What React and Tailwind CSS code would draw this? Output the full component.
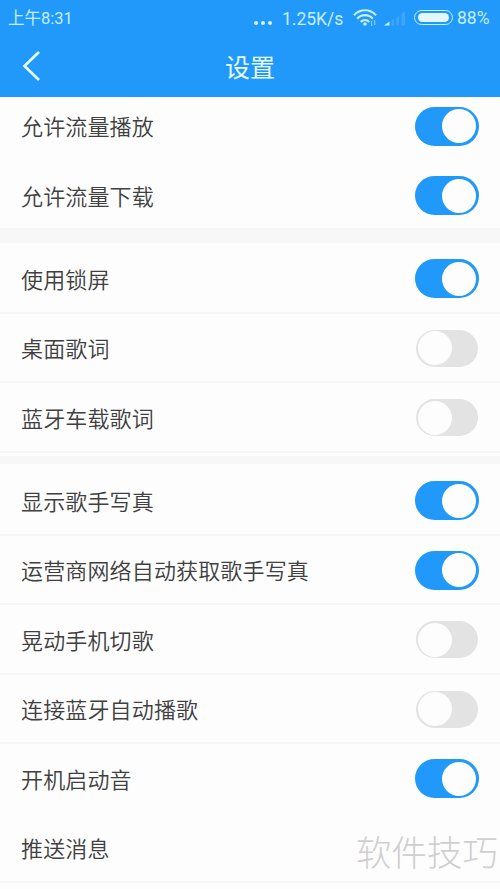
import React, { useState } from "react";

const GROUPS = [
  [
    { label: "允许流量播放", on: true },
    { label: "允许流量下载", on: true },
  ],
  [
    { label: "使用锁屏", on: true, line: true },
    { label: "桌面歌词", on: false, line: true },
    { label: "蓝牙车载歌词", on: false, line: true },
  ],
  [
    { label: "显示歌手写真", on: true, line: true },
    { label: "运营商网络自动获取歌手写真", on: true, line: true },
    { label: "晃动手机切歌", on: false, line: true },
    { label: "连接蓝牙自动播歌", on: false, line: true },
    { label: "开机启动音", on: true },
    { label: "推送消息", line: true },
  ],
];

function Toggle({ defaultOn }) {
  const [on, setOn] = useState(defaultOn);

  return (
    <button
      type="button"
      role="switch"
      aria-checked={on}
      onClick={() => setOn(!on)}
      className={`mt-[2px] flex h-[39px] w-16 shrink-0 items-center rounded-full ${
        on ? "justify-end bg-[#2199fb] px-[3px]" : "justify-start px-px"
      }`}
    >
      {on ? (
        <span className="h-[34px] w-[34px] rounded-full bg-[#fdfdfd]" />
      ) : (
        <span className="flex h-[37px] w-[62px] items-center rounded-full bg-[#e3e3e3] pl-0.5">
          <span className="h-[34px] w-[34px] rounded-full bg-[#fdfdfd]" />
        </span>
      )}
    </button>
  );
}

function Row({ label, on, line }) {
  return (
    <div
      className={`flex h-[69.5px] items-center justify-between border-b-2 pr-[21px] pl-[21px] ${
        line ? "border-[#f6f6f6]" : "border-transparent"
      }`}
    >
      <span className="text-[22px] leading-8 font-[350] tracking-[0.15px] whitespace-nowrap text-[#404040]">
        {label}
      </span>
      {on !== undefined && <Toggle defaultOn={on} />}
    </div>
  );
}

function StatusBar() {
  return (
    <div className="flex h-9 items-center pr-2 pl-2 text-[#c5efff]">
      <span className="mt-px font-['Roboto','Noto_Sans_CJK_SC',sans-serif] text-[16.5px] leading-9">上午8:31</span>
      <div className="ml-auto flex items-center">
        <div className="mt-[10px] mr-[10px] flex gap-[3px]">
          <i className="h-1 w-1 rounded-full bg-[#d5f3ff]" />
          <i className="h-1 w-1 rounded-full bg-[#d5f3ff]" />
          <i className="h-1 w-1 rounded-full bg-[#d5f3ff]" />
        </div>
        <span className="mt-px w-[62px] font-['Roboto',sans-serif] text-[17.5px] leading-9">1.25K/s</span>

        {/* wifi */}
        <svg className="ml-[9px]" width="24" height="18" viewBox="0 0 24 18" fill="none" stroke="currentColor">
          <path d="M1 6.2C7-.4 17-.4 23 6.2" strokeWidth="2.2" />
          <path d="M4.2 9.8C8.5 5 15.5 5 19.8 9.8" strokeWidth="2.2" />
          <path d="M7.8 13C10 10.3 14 10.3 16.2 13" strokeWidth="2.2" />
          <circle cx="12" cy="15" r="1.8" fill="currentColor" stroke="none" />
          <path d="M18.6 12v5M21.6 11v5" strokeWidth="1.2" opacity=".6" />
        </svg>

        {/* mobile signal */}
        <svg className="ml-[7px]" width="23" height="16" viewBox="0 0 23 16" fill="currentColor">
          <path d="M0 15.5L5.5 11.5V15.5Z" />
          <path d="M7.5 10.5L10 9V15.5H7.5ZM12.3 7.5L14.8 6V15.5H12.3ZM17.5 3.5L21 1V15.5H17.5Z" opacity=".16" />
        </svg>

        {/* battery */}
        <div className="mb-[2px] ml-[7px] flex h-[15px] w-[39px] items-center justify-center rounded-full border-[1.5px] border-[#c5efff]">
          <div className="h-[9px] w-[31px] rounded-full bg-[#e2f7ff]" />
        </div>
        <span className="ml-[4px] w-[35px] font-['Roboto',sans-serif] text-[17.5px] leading-9">88%</span>
      </div>
    </div>
  );
}

export default function App() {
  return (
    <div className="relative flex h-[889px] w-[500px] flex-col overflow-hidden bg-[#fdfdfd] font-['Noto_Sans_CJK_SC',sans-serif]">
      <header className="h-[97px] shrink-0 bg-[#2199fb]">
        <StatusBar />
        <div className="grid h-[61px] grid-cols-3 items-center">
          <svg className="mb-[2px] ml-[22px]" width="20" height="32" viewBox="0 0 20 32" fill="none" stroke="#e6faff" strokeWidth="2.7">
            <path d="M17 2L2.5 16L17 30" />
          </svg>
          <h1 className="text-center text-[25px] leading-[61px] text-[#e6faff]">设置</h1>
        </div>
      </header>

      {/* list is scrolled a little, so the first row sits partly under the header */}
      <main className="flex-1 overflow-hidden">
        <div className="-mt-[5.5px]">
          {GROUPS[0].map((row) => (
            <Row key={row.label} {...row} />
          ))}
        </div>
        <div className="-mt-[2.5px] h-[15px] bg-[#f7f7f7]" />
        <div className="mt-px">
          {GROUPS[1].map((row) => (
            <Row key={row.label} {...row} />
          ))}
        </div>
        <div className="mt-[3.5px] h-2 bg-[#f7f7f7]" />
        <div className="mt-[2px]">
          {GROUPS[2].map((row) => (
            <Row key={row.label} {...row} />
          ))}
        </div>
      </main>

      <span className="absolute right-[2px] bottom-[11px] text-[35.5px] leading-[54px] font-light text-[#cfcfcf]">软件技巧</span>
    </div>
  );
}
